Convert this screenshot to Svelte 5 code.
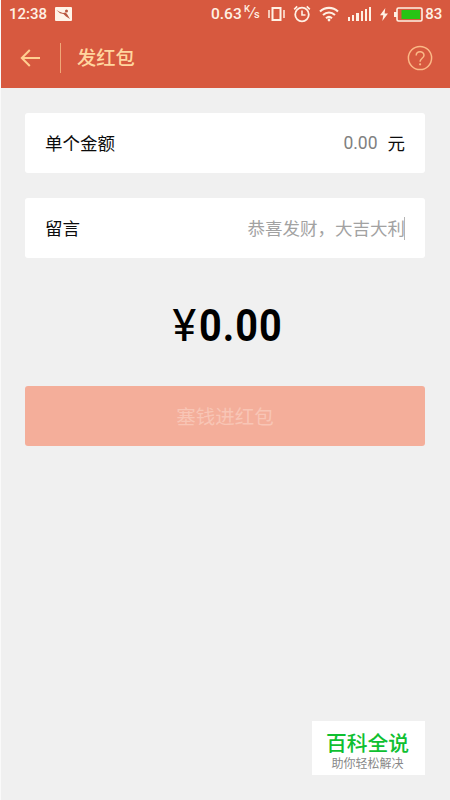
<script lang="ts">
	let amount = '';
	let message = '';

	const bars = [4, 6, 8, 10, 12, 14];

	$: total = (Number(amount) || 0).toFixed(2);
</script>

<div class="screen">
	<header>
		<div class="status">
			<span class="time">12:38</span>
			<svg class="photo" width="17" height="14" viewBox="0 0 17 14">
				<rect width="17" height="14" rx="1" fill="#fff4e8" />
				<path d="M1.500 3 4.500 4.800 8 6l2.500-.5L12 7l3 5-4-2.500-2.500-2.500-3.500-.8z" fill="#b8573f" />
				<circle cx="11.500" cy="4" r="1.500" fill="#b8573f" />
			</svg>
			<span class="speed">0.63</span>
			<span class="unit"><sup>K</sup><i>/</i><sub>s</sub></span>
			<svg class="vibrate" width="17" height="16" viewBox="0 0 17 16" fill="none" stroke="#fff1e4">
				<rect x="4.500" y="2" width="8" height="12" stroke-width="2" />
				<path d="M1 4v8M16 4v8" stroke-width="1.500" />
			</svg>
			<svg class="alarm" width="18" height="18" viewBox="0 0 18 18" fill="none" stroke="#fff1e4">
				<circle cx="9" cy="9.500" r="6.800" stroke-width="1.800" />
				<path d="M9 5.500V10h3.500" stroke-width="1.600" />
				<path d="M1.200 4.300 4.200 1.400M16.800 4.300l-3-2.900" stroke-width="1.700" />
			</svg>
			<svg class="wifi" width="20" height="16" viewBox="0 0 20 16" fill="none" stroke="#fff1e4" stroke-width="2.100">
				<path d="M1 5.500c5.200-4.800 12.800-4.800 18 0M4 9c3.600-3.200 8.400-3.200 12 0M7 12.200c1.900-1.600 4.100-1.600 6 0" />
				<circle cx="10" cy="14" r="1.400" fill="#fff1e4" stroke="none" />
			</svg>
			<div class="signal">
				{#each bars as height}
					<i style="height: {height}px"></i>
				{/each}
			</div>
			<svg class="bolt" width="8" height="13" viewBox="0 0 8 13">
				<path d="M5.300 0 0 7.300h3.300L2.300 13 8 5.400H4.600z" fill="#fff1e4" />
			</svg>
			<svg class="battery" width="29" height="15" viewBox="0 0 29 15">
				<path d="M0 5h3v5H0z" fill="#fff1e4" />
				<rect x="3" y="1" width="25" height="13" rx="1.500" fill="none" stroke="#fff1e4" stroke-width="1.600" />
				<path d="M7.500 3H26v9H7.500z" fill="#27c414" />
			</svg>
			<span class="percent">83</span>
		</div>

		<nav>
			<button class="back" aria-label="返回">
				<svg width="20" height="18" viewBox="0 0 20 18" fill="none" stroke="#ffcf91" stroke-width="2">
					<path d="M9.800 1 1.800 9l8 8M2 9h18" />
				</svg>
			</button>
			<h1>发红包</h1>
			<button class="help" aria-label="帮助">
				<svg width="26" height="26" viewBox="0 0 26 26" fill="none" stroke="#fbb987" stroke-width="1.500">
					<circle cx="13" cy="13" r="11.600" />
					<path d="M9.200 10.500c0-5 7.800-5 7.800-.3 0 3-3.900 3.200-3.900 6.600" />
					<circle cx="13.100" cy="19.300" r="1.100" fill="#fbb987" stroke="none" />
				</svg>
			</button>
		</nav>
	</header>

	<main>
		<label class="row">
			<span class="label">单个金额</span>
			<input class="money" type="text" placeholder="0.00" bind:value={amount} />
			<span class="label yuan">元</span>
		</label>

		<label class="row">
			<span class="label">留言</span>
			<input class="message" type="text" placeholder="恭喜发财，大吉大利" bind:value={message} />
			<i class="caret"></i>
		</label>

		<p class="total"><span class="currency">¥</span><span class="digits">{total}</span></p>

		<button class="submit" disabled={!Number(amount)}>塞钱进红包</button>
	</main>

	<footer>
		<div class="badge">
			<strong>百科全说</strong>
			<small>助你轻松解决</small>
		</div>
	</footer>
</div>

<style>
	:global(body) {
		background: #f0f0f0;
	}

	.screen {
		box-sizing: border-box;
		display: flex;
		flex-direction: column;
		height: 800px;
		border-left: 1px solid #fafafa;
		font-family: Roboto, 'Noto Sans CJK SC', sans-serif;
		color: #0c0c0c;
	}

	button,
	input {
		padding: 0;
		border: 0;
		background: none;
		font-family: inherit;
	}

	svg {
		display: block;
		flex: none;
	}

	header {
		height: 88px;
		background: #d7593f;
	}

	.status {
		display: flex;
		align-items: center;
		height: 28px;
		padding-left: 8px;
		font-size: 15px;
		font-weight: 500;
		line-height: 28px;
		color: #fff1e4;
	}

	.time {
		width: 38px;
	}

	.photo {
		margin-left: 8px;
	}

	.speed {
		width: 31px;
		margin-left: 139px;
		font-size: 15.5px;
	}

	.unit {
		display: flex;
		width: 17px;
		margin-left: 2px;
		font-size: 11px;
		line-height: 14px;
	}

	.unit i {
		margin: 0 -1px;
		font-size: 15px;
		font-weight: 400;
	}

	.unit sup {
		margin-top: -4px;
		font-size: 9.5px;
		vertical-align: baseline;
	}

	.unit sub {
		margin-top: 2px;
		font-size: 11px;
		vertical-align: baseline;
	}

	.vibrate {
		margin-left: 7px;
	}

	.alarm {
		margin-left: 8px;
	}

	.wifi {
		margin-left: 8px;
	}

	.signal {
		display: flex;
		align-items: flex-end;
		gap: 2px;
		height: 14px;
		margin-left: 9px;
	}

	.signal i {
		width: 2.2px;
		background: #fff1e4;
	}

	.bolt {
		margin-left: 9px;
	}

	.battery {
		margin: 0 2px 0 6px;
	}

	nav {
		display: flex;
		align-items: center;
		height: 60px;
	}

	.back {
		height: 30px;
		padding: 0 20px 0 19px;
		border-right: 1px solid #f0a878;
	}

	h1 {
		margin: 0 auto 0 16px;
		padding-top: 2px;
		font-size: 19.3px;
		font-weight: 500;
		line-height: 30px;
		color: #ffd69f;
	}

	.help {
		margin-right: 17px;
	}

	main {
		padding: 25px 25px 0 24px;
	}

	.row {
		box-sizing: border-box;
		display: flex;
		align-items: center;
		height: 60px;
		margin-bottom: 25px;
		padding: 0 20px;
		border-radius: 3px;
		background: #fff;
		font-size: 17.5px;
	}

	.label {
		padding-bottom: 2px;
	}

	input {
		flex: 1;
		min-width: 0;
		height: 30px;
		font-size: 17.5px;
		text-align: right;
		outline: none;
	}

	input::placeholder {
		color: #a2a2a2;
		opacity: 1;
	}

	.money::placeholder {
		color: #808080;
	}

	.message {
		padding-top: 1px;
	}

	.yuan {
		margin-left: 10px;
	}

	.caret {
		width: 1px;
		height: 23px;
		margin-left: -1px;
		background: #b5b5b5;
	}

	.total {
		display: flex;
		justify-content: center;
		height: 54px;
		margin: 40px 0 34px;
		padding-left: 5px;
		font-size: 45px;
		font-weight: 700;
		line-height: 55px;
		color: #000;
	}

	.currency {
		font-weight: 400;
	}

	.digits {
		margin: 0 -12px 0 3px;
		letter-spacing: 1.2px;
		transform: scaleX(0.88);
		transform-origin: left;
	}

	.submit {
		display: block;
		width: 100%;
		height: 60px;
		padding-bottom: 2px;
		border-radius: 3px;
		background: #f4ae9a;
		font-size: 19.5px;
		color: #f8c5b5;
	}

	footer {
		display: flex;
		justify-content: flex-end;
		margin-top: auto;
		padding: 0 25px 25px;
	}

	.badge {
		box-sizing: border-box;
		display: flex;
		flex-direction: column;
		align-items: center;
		width: 113px;
		height: 54px;
		padding-right: 2px;
		background: #fff;
	}

	.badge strong {
		margin-top: 9px;
		font-size: 20.8px;
		font-weight: 500;
		line-height: 28px;
		color: #0fc031;
	}

	.badge small {
		font-size: 12px;
		line-height: 12px;
		color: #888;
	}
</style>
